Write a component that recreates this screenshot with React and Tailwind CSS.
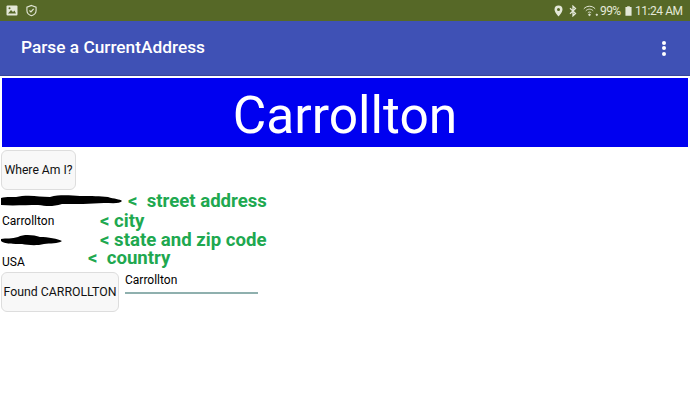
export default function App() {
  return (
    <div className="w-[690px] h-[410px] overflow-hidden bg-white flex flex-col font-['Roboto',sans-serif]">
      <div className="h-[21px] bg-[#566827] flex items-center justify-between pl-[6px] pr-[7px] text-[#e4e8d8]">
        <div className="flex items-center gap-[8px]">
          <svg width="12" height="11" viewBox="0 0 12 11">
            <rect x="0.5" y="0.5" width="11" height="10" rx="1" fill="#e4e8d8" />
            <path d="M2 8.5 L5 5 L7 7 L8.5 5.5 L10 8.5 Z" fill="#566827" />
            <circle cx="3.5" cy="3.2" r="1" fill="#566827" />
          </svg>
          <svg width="11" height="13" viewBox="0 0 12 13" fill="none" stroke="#e4e8d8" strokeWidth="1.2">
            <path d="M6 1 L11 2.8 V6.5 C11 9.5 8.5 11.5 6 12.2 C3.5 11.5 1 9.5 1 6.5 V2.8 Z" />
            <path d="M3.8 6.5 L5.4 8 L8.3 4.8" />
          </svg>
        </div>
        <div className="flex items-center text-[12px] leading-none">
          <svg className="mr-[6px]" width="9" height="12" viewBox="0 0 9 12">
            <path fillRule="evenodd" d="M4.5 0.5 A4 4 0 0 1 8.5 4.5 C8.5 7.2 4.5 11.5 4.5 11.5 C4.5 11.5 0.5 7.2 0.5 4.5 A4 4 0 0 1 4.5 0.5 Z M4.5 3 A1.5 1.5 0 1 0 4.5 6 A1.5 1.5 0 1 0 4.5 3 Z" fill="#e4e8d8" />
          </svg>
          <svg className="mr-[6px]" width="8" height="12" viewBox="0 0 8 12" fill="none" stroke="#e4e8d8" strokeWidth="1.3">
            <path d="M1 3.2 L6.5 8.4 L4 10.8 V1.2 L6.5 3.6 L1 8.8" />
          </svg>
          <svg className="mr-[2px]" width="15" height="12" viewBox="0 0 15 12" fill="none" stroke="#e4e8d8" strokeWidth="1">
            <path d="M0.8 3.8 C4 0.4 9 0.4 12.2 3.8" />
            <path d="M2.8 5.8 C5 3.6 8 3.6 10.2 5.8" />
            <path d="M4.8 7.8 C5.8 6.8 7.2 6.8 8.2 7.8" />
            <circle cx="6.5" cy="9.8" r="0.8" fill="#e4e8d8" />
            <circle cx="13.8" cy="9.8" r="0.7" fill="#e4e8d8" />
          </svg>
          <span className="mr-[5px] w-[20px] tracking-[-0.6px] whitespace-nowrap">99%</span>
          <svg className="mr-[3px]" width="7" height="12" viewBox="0 0 8 12">
            <path d="M2.5 0.5 H5.5 V1.5 H7.5 V11.5 H0.5 V1.5 H2.5 Z" fill="#e4e8d8" />
          </svg>
          <span className="w-[48px] tracking-[-0.45px] whitespace-nowrap">11:24 AM</span>
        </div>
      </div>
      <div className="h-[55px] bg-[#3f51b5] border-b border-[#36459b] flex items-center justify-between pl-[21px] pr-[24px]">
        <span className="text-white text-[17.3px] font-medium">Parse a CurrentAddress</span>
        <div className="flex flex-col gap-[1.5px]">
          <span className="w-[4px] h-[4px] rounded-full bg-white" />
          <span className="w-[4px] h-[4px] rounded-full bg-white" />
          <span className="w-[4px] h-[4px] rounded-full bg-white" />
        </div>
      </div>
      <div className="mx-[2px] mt-[2px] h-[69px] bg-[#0000f0] flex items-center justify-center pt-[6px] text-white text-[51.5px] leading-none">
        Carrollton
      </div>
      <div className="flex flex-col items-start pl-[2px] pt-[3px] text-black text-[12px]">
        <button className="w-[75px] h-[40px] ml-[-1px] rounded-[6px] border border-[#dddddd] bg-[#f8f8f8] text-[12.2px] text-[#111]">
          Where Am I?
        </button>
        <div className="h-[20px] mt-[1px] flex items-center">
          <svg className="ml-[-2px]" width="124" height="14" viewBox="0 0 124 14">
            <path d="M1 4 C6 2 14 4 22 2 C34 1 40 3 50 3 C62 0 72 2 80 2 C92 2 100 2 108 3 C114 5 120 5 122 7 C120 10 112 9 104 9 C90 10 76 10 62 10 C52 13 46 12 38 11 C26 11 12 12 1 11 Z" fill="#000" />
          </svg>
          <span className="ml-[4px] text-[#20a84f] text-[18.6px] font-bold whitespace-pre leading-[20px]">{"<  street address"}</span>
        </div>
        <div className="h-[20px] flex items-center">
          <span className="w-[98px] leading-[14px] pb-[1px]">Carrollton</span>
          <span className="text-[#20a84f] text-[18.6px] font-bold leading-[20px]">{"< city"}</span>
        </div>
        <div className="h-[18px] flex items-center">
          <svg className="ml-[-2px]" width="100" height="13" viewBox="0 0 100 13">
            <path d="M1 5 C6 4 12 5 18 3 C24 0 34 1 40 3 C48 3 58 5 62 7 C58 10 50 9 44 10 C36 12 28 11 22 10 C14 10 4 10 1 7 Z" fill="#000" />
          </svg>
          <span className="text-[#20a84f] text-[18.6px] font-bold leading-[18px]">{"< state and zip code"}</span>
        </div>
        <div className="h-[21px] flex items-start">
          <span className="w-[86px] leading-[14px] pt-[6px]">USA</span>
          <span className="text-[#20a84f] text-[18.6px] font-bold whitespace-pre leading-[19px]">{"<  country"}</span>
        </div>
        <div className="flex items-start mt-[2px]">
          <button className="w-[118px] h-[40px] ml-[-1px] rounded-[6px] border border-[#dddddd] bg-[#f8f8f8] text-[12.3px] text-[#111] whitespace-nowrap">
            Found CARROLLTON
          </button>
          <div className="ml-[6px] w-[133px] h-[22px] border-b-2 border-[#8fb0ae] text-[12px] leading-[16px]">
            Carrollton
          </div>
        </div>
      </div>
    </div>
  );
}
